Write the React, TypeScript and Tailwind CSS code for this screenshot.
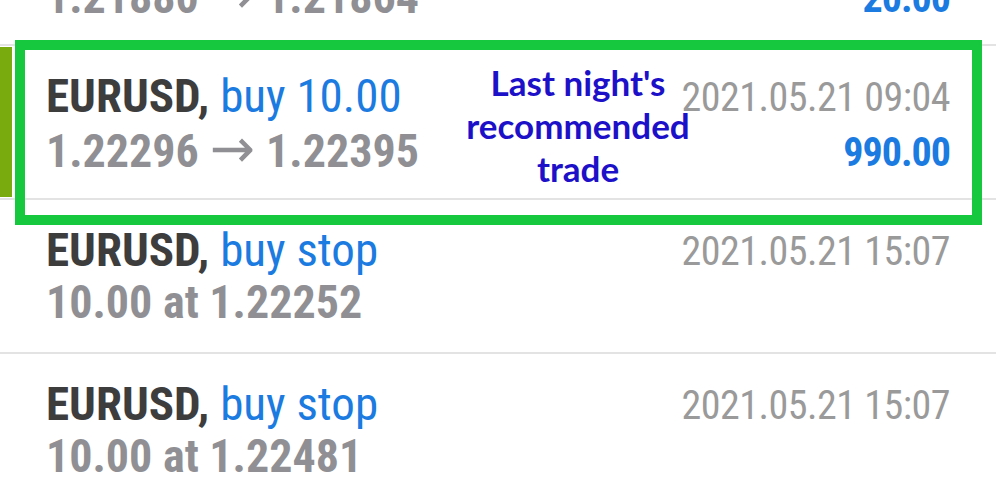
import React from 'react';

type Row = {
  symbol: string;
  side: string;
  from?: string;
  to?: string;
  detail?: string;
  time: string;
  profit?: string;
  selected?: boolean;
};

const rows: Row[] = [
  { symbol: 'EURUSD', side: 'buy 10.00', from: '1.21880', to: '1.21864', time: '2021.05.20 22:11', profit: '20.00' },
  { symbol: 'EURUSD', side: 'buy 10.00', from: '1.22296', to: '1.22395', time: '2021.05.21 09:04', profit: '990.00', selected: true },
  { symbol: 'EURUSD', side: 'buy stop', detail: '10.00 at 1.22252', time: '2021.05.21 15:07' },
  { symbol: 'EURUSD', side: 'buy stop', detail: '10.00 at 1.22481', time: '2021.05.21 15:07' },
];

const cond = "font-['Roboto_Condensed','Roboto',sans-serif]";

function TradeRow({ row }: { row: Row }) {
  return (
    <div className="flex h-[154px] border-b-2 border-[#e3e3e3]">
      {/* selection marker */}
      <div className={`w-[12px] my-[1px] shrink-0 ${row.selected ? 'bg-[#7aab0e]' : ''}`} />
      <div className={`flex flex-1 justify-between pl-[34px] pr-[46px] pt-[23px] ${cond}`}>
        <div className="leading-[53px]">
          <div className="text-[47px] whitespace-nowrap">
            <span className="font-bold text-[#3d3d3d]">{row.symbol},</span>{' '}
            <span className="text-[#1b7be0]">{row.side}</span>
          </div>
          <div className="h-[53px] text-[46px] font-bold text-[#909094] whitespace-nowrap">
            {row.detail ?? (
              <>
                {row.from}
                <span className="font-['DejaVu_Sans',sans-serif] font-normal text-[54px] leading-[53px] mx-[11px]">→</span>
                {row.to}
              </>
            )}
          </div>
        </div>
        <div className="flex flex-col items-end leading-[53px] pt-[2px]">
          <div className="text-[40px] tracking-[-0.5px] text-[#9a9a9a] whitespace-nowrap">{row.time}</div>
          {row.profit && <div className="text-[40px] tracking-[-1px] font-bold text-[#1b7be0] pt-[2px]">{row.profit}</div>}
        </div>
      </div>
    </div>
  );
}

export default function App() {
  return (
    <div className="relative h-[480px] w-[996px] overflow-hidden bg-white">
      <div className="-mt-[108px]">
        {rows.map((r, i) => <TradeRow key={i} row={r} />)}
      </div>

      {/* annotation overlay */}
      <div className="absolute left-[15px] top-[40px] w-[967px] h-[185px] border-[10px] border-[#16c83e]" />
      <div className="absolute left-[448px] top-[61px] w-[260px] text-center font-['Lato',sans-serif] font-bold text-[35px] leading-[43px] text-[#1c10c9]">
        Last night's<br />recommended<br />trade
      </div>
    </div>
  );
}
